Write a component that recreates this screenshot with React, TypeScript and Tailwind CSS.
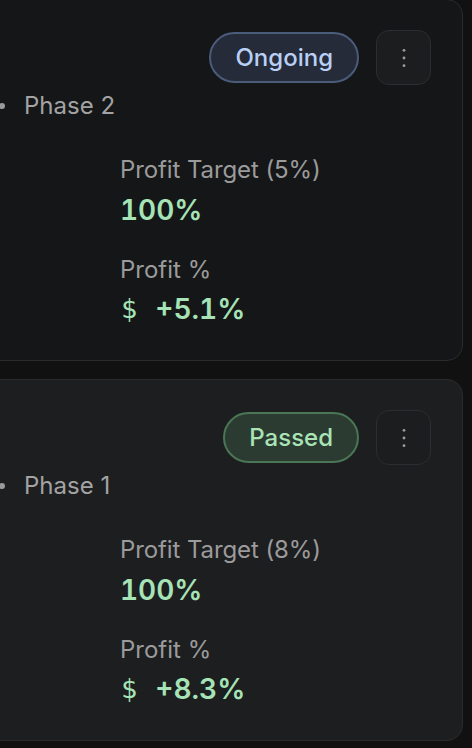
import React from "react";

type CardProps = {
  bg: string;
  status: "Ongoing" | "Passed";
  phase: string;
  target: string;
  profit: string;
};

function Dots() {
  return (
    <svg width="6" height="24" viewBox="0 0 6 24" aria-hidden>
      <circle cx="3" cy="4.3" r="1.4" fill="#9c9c9c" />
      <circle cx="3" cy="12" r="1.4" fill="#9c9c9c" />
      <circle cx="3" cy="19.7" r="1.4" fill="#9c9c9c" />
    </svg>
  );
}

function Card({ bg, status, phase, target, profit }: CardProps) {
  const ongoing = status === "Ongoing";
  return (
    <div
      className={`ml-[-24px] h-[362px] rounded-[16px] border border-[#2a2b2e] ${bg} pr-[31px] pt-[30px]`}
    >
      <div className="flex items-center justify-end gap-[17px]">
        <div
          className={
            ongoing
              ? "flex h-[51px] items-center rounded-full border-2 border-[#4b5b7a] bg-[#252b39] px-[24px] text-[24px] font-medium text-[#b9cff5]"
              : "flex h-[51px] items-center rounded-full border-2 border-[#4a7655] bg-[#2b3b31] px-[24px] text-[24px] font-medium text-[#a9e3b6]"
          }
        >
          {status}
        </div>
        <div className="flex h-[55px] w-[55px] items-center justify-center rounded-[13px] border border-[#2c2d30] bg-[#1c1d1f]">
          <Dots />
        </div>
      </div>
      <div className="mt-[6px] flex items-center text-[24px] leading-[30px] text-[#a3a3a3]">
        <span className="ml-[22px] h-[6px] w-[6px] rounded-full bg-[#9a9a9a]" />
        <span className="ml-[19px]">{phase}</span>
      </div>
      <div className="ml-[143px] mt-[34px] flex flex-col">
        <div className="text-[24px] leading-[30px] tracking-[-0.1px] text-[#9b9b9b]">Profit Target ({target})</div>
        <div className="mt-[8px] text-[28px] font-semibold leading-[34px] tabular-nums text-[#a6e3b6]">100%</div>
        <div className="mt-[28px] text-[24px] leading-[30px] text-[#9b9b9b]">Profit %</div>
        <div className="mt-[7px] flex items-center leading-[34px] text-[#a6e3b6]">
          <span className="ml-[1px] text-[27px] font-normal" style={{ fontFamily: '"DejaVu Sans Mono", monospace' }}>$</span>
          <span className="ml-[18px] text-[28px] font-semibold tabular-nums">{profit}</span>
        </div>
      </div>
    </div>
  );
}

export default function App() {
  return (
    <div
      className="h-[748px] w-[472px] overflow-hidden bg-[#111112] pr-[9px]"
      style={{ fontFamily: 'Inter, "Noto Sans", sans-serif' }}
    >
      <div className="mt-[-1px] flex flex-col gap-[18px]">
        <Card bg="bg-[#151618]" status="Ongoing" phase="Phase 2" target="5%" profit="+5.1%" />
        <Card bg="bg-[#1d1e20]" status="Passed" phase="Phase 1" target="8%" profit="+8.3%" />
      </div>
    </div>
  );
}
